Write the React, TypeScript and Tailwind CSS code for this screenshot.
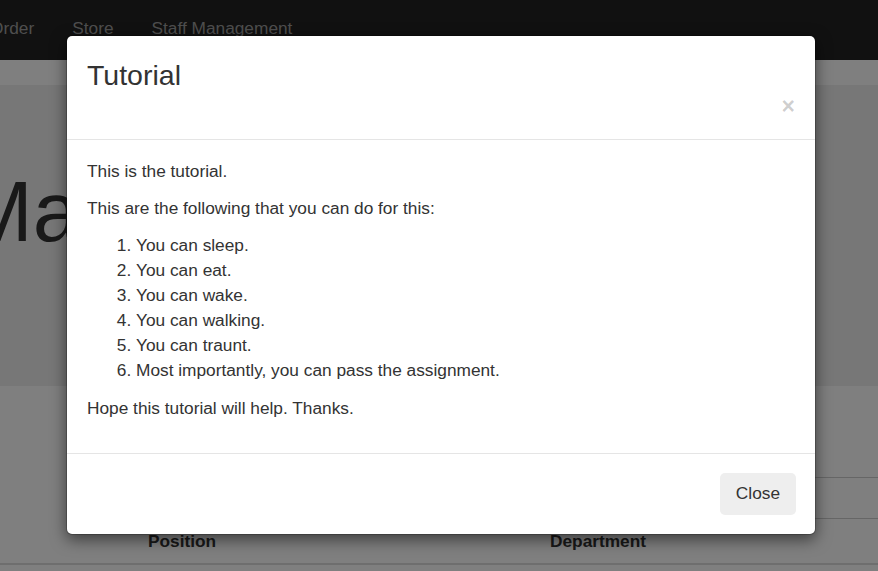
import React from "react";

export default function App() {
  const items = [
    "You can sleep.",
    "You can eat.",
    "You can wake.",
    "You can walking.",
    "You can traunt.",
    "Most importantly, you can pass the assignment.",
  ];
  return (
    <div className="relative w-[878px] h-[571px] overflow-hidden bg-white font-['Liberation_Sans',Arial,sans-serif] text-[#333]">
      {/* Page underneath */}
      <nav className="h-[60px] bg-[#222] flex items-center gap-[38px] text-[17.3px] text-[#9d9d9d] whitespace-nowrap">
        <span className="ml-[-10px] pb-[2px]">Order</span>
        <span className="pb-[2px]">Store</span>
        <span className="pb-[2px]">Staff Management</span>
      </nav>
      <div className="h-[25px]" />
      <div className="h-[301px] bg-[#eee] pt-[84px]">
        <h1 className="ml-[-38px] text-[85px] leading-none whitespace-nowrap">Management</h1>
      </div>
      <div className="h-[91px]" />
      <div className="flex justify-end">
        <div className="w-[420px] h-[42px] mr-[-10px] border border-[#ccc] rounded-[4px]" />
      </div>
      <div className="flex h-[46px] pt-[2px] items-center border-b-2 border-[#ddd] font-bold text-[17.3px]">
        <span className="pl-[148px] w-[550px]">Position</span>
        <span>Department</span>
      </div>

      {/* Backdrop */}
      <div className="absolute inset-0 bg-black/50" />

      {/* Modal */}
      <div className="absolute left-[66px] top-[35px] w-[750px] bg-white rounded-[6px] border border-black/20 shadow-[0_5px_15px_rgba(0,0,0,0.5)] bg-clip-padding">
        <div className="px-[20px] pt-[20px] pb-[20px] border-b border-[#e5e5e5]">
          <h4 className="text-[28.5px] leading-[38px] font-normal">Tutorial</h4>
          <div className="flex justify-end">
            <span className="text-[23px] font-bold leading-[25px] text-black/20">×</span>
          </div>
        </div>
        <div className="px-[20px] pt-[19px] pb-[20px] text-[17.3px] leading-[25px]">
          <p className="mb-[12px]">This is the tutorial.</p>
          <p className="mb-[12px]">This are the following that you can do for this:</p>
          <ol className="list-decimal pl-[49px] mb-[13px]">
            {items.map((t) => (
              <li key={t}>{t}</li>
            ))}
          </ol>
          <p className="mb-[12px]">Hope this tutorial will help. Thanks.</p>
        </div>
        <div className="border-t border-[#e5e5e5] px-[19px] pt-[19px] pb-[19px] flex justify-end">
          <button className="h-[42px] px-[16px] bg-[#eee] rounded-[5px] text-[17.3px] text-[#333]">Close</button>
        </div>
      </div>
    </div>
  );
}
